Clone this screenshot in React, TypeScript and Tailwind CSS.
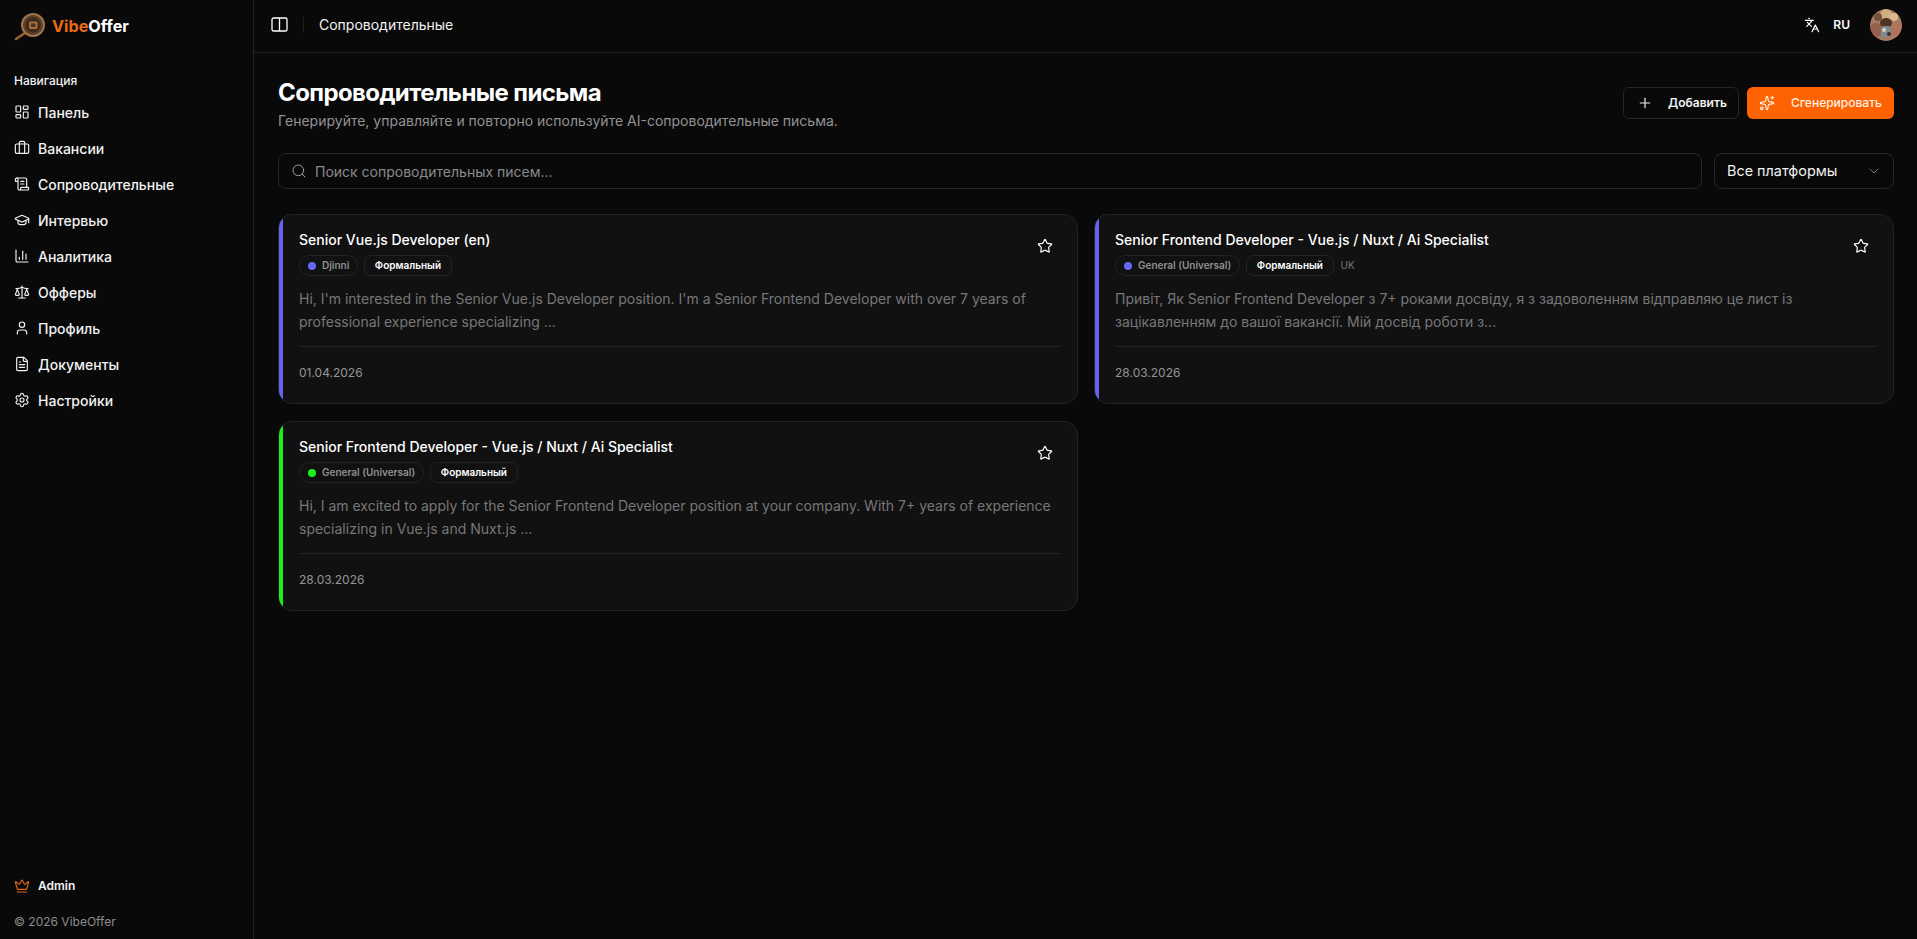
import { Briefcase, ChartColumn, ChevronDown, Crown, FileText, GraduationCap, Languages, LayoutDashboard, Plus, Scale, ScrollText, Search, Settings, Sparkles, Star, User } from "lucide-react";

const nav = [
  { label: "Панель", Icon: LayoutDashboard },
  { label: "Вакансии", Icon: Briefcase },
  { label: "Сопроводительные", Icon: ScrollText },
  { label: "Интервью", Icon: GraduationCap },
  { label: "Аналитика", Icon: ChartColumn },
  { label: "Офферы", Icon: Scale },
  { label: "Профиль", Icon: User },
  { label: "Документы", Icon: FileText },
  { label: "Настройки", Icon: Settings },
];

const cards = [
  { title: "Senior Vue.js Developer (en)", platform: "Djinni", color: "bg-[#6366f1]", dot: "bg-[#6366f1]", lang: "", text: "Hi, I'm interested in the Senior Vue.js Developer position. I'm a Senior Frontend Developer with over 7 years of professional experience specializing ...", date: "01.04.2026" },
  { title: "Senior Frontend Developer - Vue.js / Nuxt / Ai Specialist", platform: "General (Universal)", color: "bg-[#6366f1]", dot: "bg-[#6366f1]", lang: "UK", text: "Привіт, Як Senior Frontend Developer з 7+ роками досвіду, я з задоволенням відправляю це лист із зацікавленням до вашої вакансії. Мій досвід роботи з...", date: "28.03.2026" },
  { title: "Senior Frontend Developer - Vue.js / Nuxt / Ai Specialist", platform: "General (Universal)", color: "bg-[#1cf01c]", dot: "bg-[#1cf01c]", lang: "", text: "Hi, I am excited to apply for the Senior Frontend Developer position at your company. With 7+ years of experience specializing in Vue.js and Nuxt.js ...", date: "28.03.2026" },
];

function Logo() {
  return (
    <svg width="32" height="30" viewBox="0 0 32 30" className="mt-[2px] shrink-0">
      <line x1="2" y1="27" x2="11" y2="21" stroke="#a0622c" strokeWidth="2.6" strokeLinecap="round" />
      <circle cx="19" cy="13" r="11" fill="#5f3f25" stroke="#9c7450" strokeWidth="2" />
      <circle cx="19" cy="13" r="7.5" fill="#3b2a1e" />
      <rect x="15" y="9.5" width="8.5" height="7.5" rx="1" fill="#a96d38" />
      <rect x="17" y="11.5" width="4.5" height="3.5" fill="#53351d" />
    </svg>
  );
}

function Avatar() {
  return (
    <svg width="32" height="32" viewBox="0 0 32 32" className="rounded-full">
      <circle cx="16" cy="16" r="16" fill="#a57c62" />
      <circle cx="6" cy="21" r="7" fill="#97604e" />
      <circle cx="27" cy="22" r="7" fill="#b4735e" />
      <circle cx="16" cy="6" r="6" fill="#d0ae84" />
      <circle cx="8" cy="8" r="4" fill="#76503a" />
      <circle cx="24" cy="8" r="4" fill="#d8b98c" />
      <ellipse cx="16" cy="14" rx="6" ry="5" fill="#4e3524" />
      <rect x="11" y="17" width="10" height="11" rx="3" fill="#7d8b93" />
      <circle cx="14" cy="21" r="2" fill="#e0d4bd" />
      <circle cx="19" cy="25" r="2" fill="#3e3029" />
    </svg>
  );
}

export default function App() {
  return (
    <div className="flex h-[939px] overflow-hidden bg-[#09090a] font-['Inter','Liberation_Sans',sans-serif] text-white">
      <aside className="flex w-[254px] shrink-0 flex-col border-r border-[#232325] px-[14px]">
        <div className="flex h-[52px] items-center gap-[6px]">
          <Logo />
          <div className="text-[16.2px] font-bold"><span className="text-[#ea6a13]">Vibe</span>Offer</div>
        </div>
        <div className="mt-[21px] text-[12px] font-medium leading-[16px] text-[#f1f1f1]">Навигация</div>
        <nav className="mt-[5px] flex flex-col">
          {nav.map(({ label, Icon }) => (
            <div key={label} className="flex h-[36px] items-center gap-[8px] text-[14px] font-medium text-[#f2f2f2]">
              <Icon size={16} strokeWidth={1.75} />
              <span>{label}</span>
            </div>
          ))}
        </nav>
        <div className="mt-auto flex h-[20px] items-center gap-[8px] text-[12px] font-semibold text-[#f2f2f2]">
          <Crown size={16} strokeWidth={1.75} className="text-[#e2681c]" />
          Admin
        </div>
        <div className="mb-[9px] mt-[18px] text-[12px] leading-[16px] text-[#8c8c8c]">© 2026 VibeOffer</div>
      </aside>
      <main className="flex min-w-0 flex-1 flex-col">
        <header className="flex h-[53px] shrink-0 items-center border-b border-[#232325] pb-[3px] pl-[17px] pr-[15px]">
          <svg width="17" height="15" viewBox="0 0 17 15" fill="none" stroke="currentColor" strokeWidth="1.3">
            <rect x="1" y="1" width="15" height="13" rx="1.5" />
            <line x1="8.5" y1="1" x2="8.5" y2="14" />
          </svg>
          <div className="mx-[15px] h-[16px] w-px bg-[#1f1f21]" />
          <span className="text-[14px] text-[#f2f2f2]">Сопроводительные</span>
          <div className="ml-auto flex items-center">
            <Languages size={16} strokeWidth={1.75} />
            <span className="ml-[13px] text-[12px] font-semibold">RU</span>
            <div className="ml-[20px]"><Avatar /></div>
          </div>
        </header>
        <div className="flex flex-col py-[24px] pl-[24px] pr-[23px]">
          <div className="flex items-start justify-between">
            <div>
              <h1 className="text-[24px] font-bold leading-[32px] tracking-tight">Сопроводительные письма</h1>
              <p className="mt-[2px] text-[14px] leading-[20px] text-[#929292]">Генерируйте, управляйте и повторно используйте AI-сопроводительные письма.</p>
            </div>
            <div className="mt-[10px] flex gap-[8px]">
              <button className="flex h-[32px] w-[116px] items-center gap-[15px] rounded-[6px] border border-[#262628] pl-[13px] text-[12px] font-semibold text-[#f2f2f2]">
                <Plus size={16} strokeWidth={1.75} />Добавить
              </button>
              <button className="flex h-[32px] w-[147px] items-center gap-[16px] rounded-[6px] bg-[#ff6200] pl-[12px] text-[12px] font-medium text-[#fff1e6]">
                <Sparkles size={16} strokeWidth={1.75} />Сгенерировать
              </button>
            </div>
          </div>
          <div className="mt-[22px] flex gap-[12px]">
            <div className="flex h-[36px] flex-1 items-center gap-[8px] rounded-[8px] border border-[#262628] pl-[12px]">
              <Search size={16} strokeWidth={1.5} className="text-[#a0a0a0]" />
              <span className="text-[14px] text-[#8a8a8a]">Поиск сопроводительных писем...</span>
            </div>
            <div className="flex h-[36px] w-[180px] items-center justify-between rounded-[8px] border border-[#262628] pl-[12px] pr-[11px]">
              <span className="text-[14.4px] text-[#f2f2f2]">Все платформы</span>
              <ChevronDown size={16} strokeWidth={1.5} className="text-[#777]" />
            </div>
          </div>
          <div className="mt-[25px] grid grid-cols-2 gap-x-[16px] gap-y-[17px]">
            {cards.map((c) => (
              <div key={c.text} className="relative h-[190px] overflow-hidden rounded-[14px] border border-[#232325] bg-[#111112] pl-[20px] pr-[16px]">
                <div className={`absolute inset-y-0 left-0 w-[4px] ${c.color}`} />
                <div className="absolute right-[24px] top-[23px]"><Star size={16} strokeWidth={1.75} /></div>
                <div className="mt-[15px] text-[14px] font-medium leading-[20px]">{c.title}</div>
                <div className="mt-[5px] flex h-[21px] items-center gap-[6px] text-[10px]">
                  <span className="flex h-[21px] items-center gap-[6px] rounded-full border border-[#232325] px-[8px] font-semibold text-[#8f8f8f]">
                    <span className={`h-[8px] w-[8px] rounded-full ${c.dot}`} />{c.platform}
                  </span>
                  <span className="flex h-[21px] items-center rounded-[7px] border border-[#232325] px-[9.5px] font-semibold text-white">Формальный</span>
                  {c.lang && <span className="ml-[1px] text-[#777]">{c.lang}</span>}
                </div>
                <p className="mt-[11px] text-[14px] leading-[23px] text-[#777777]">{c.text}</p>
                <div className="mt-[13px] border-t border-[#232325] pt-[18px] text-[12px] leading-[16px] text-[#959595]">{c.date}</div>
              </div>
            ))}
          </div>
        </div>
      </main>
    </div>
  );
}
